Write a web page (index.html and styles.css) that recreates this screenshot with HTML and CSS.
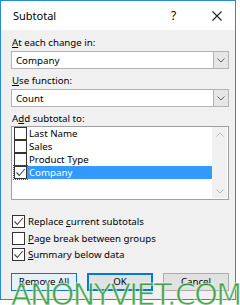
FILE: index.html
```html
<!DOCTYPE html>
<html lang="en">
<head>
    <meta charset="UTF-8">
    <title>Subtotal</title>
    <link rel="stylesheet" href="styles.css">
</head>
<body>
    <div class="dialog">
        <div class="titlebar">
            <span class="title">Subtotal</span>
            <span class="help">?</span>
            <svg class="close" width="10" height="10" viewBox="0 0 10 10"><path d="M0.5 0.5L9.5 9.5M9.5 0.5L0.5 9.5" stroke="#222" stroke-width="1.1"/></svg>
        </div>
        <div class="content">
            <div class="label"><u>A</u>t each change in:</div>
            <div class="combo">
                <span class="value">Company</span>
                <span class="drop"><svg width="8" height="5" viewBox="0 0 8 5"><path d="M0.5 0.5L4 4L7.5 0.5" fill="none" stroke="#606060"/></svg></span>
            </div>
            <div class="label"><u>U</u>se function:</div>
            <div class="combo">
                <span class="value">Count</span>
                <span class="drop"><svg width="8" height="5" viewBox="0 0 8 5"><path d="M0.5 0.5L4 4L7.5 0.5" fill="none" stroke="#606060"/></svg></span>
            </div>
            <div class="label">A<u>d</u>d subtotal to:</div>
            <div class="listbox">
                <div class="items">
                    <div class="item"><span class="box"></span><span class="text">Last Name</span></div>
                    <div class="item"><span class="box"></span><span class="text">Sales</span></div>
                    <div class="item"><span class="box"></span><span class="text">Product Type</span></div>
                    <div class="item selected"><span class="box checked"><svg width="11" height="11" viewBox="0 0 11 11"><path d="M1.5 5.5L4.3 8.5L9.8 2" fill="none" stroke="#444" stroke-width="1.1"/></svg></span><span class="text">Company</span></div>
                </div>
                <div class="scrollbar">
                    <svg width="8" height="5" viewBox="0 0 8 5"><path d="M0.5 4.5L4 1L7.5 4.5" fill="none" stroke="#b8b8b8"/></svg>
                    <svg width="8" height="5" viewBox="0 0 8 5"><path d="M0.5 0.5L4 4L7.5 0.5" fill="none" stroke="#b8b8b8"/></svg>
                </div>
            </div>
            <div class="options">
                <div class="option"><span class="box checked"><svg width="11" height="11" viewBox="0 0 11 11"><path d="M1.5 5.5L4.3 8.5L9.8 2" fill="none" stroke="#444" stroke-width="1.1"/></svg></span><span>Replace <u>c</u>urrent subtotals</span></div>
                <div class="option"><span class="box"></span><span><u>P</u>age break between groups</span></div>
                <div class="option"><span class="box checked"><svg width="11" height="11" viewBox="0 0 11 11"><path d="M1.5 5.5L4.3 8.5L9.8 2" fill="none" stroke="#444" stroke-width="1.1"/></svg></span><span><u>S</u>ummary below data</span></div>
            </div>
            <div class="buttons">
                <button class="btn remove"><u>R</u>emove All</button>
                <button class="btn ok">OK</button>
                <button class="btn">Cancel</button>
            </div>
        </div>
        <div class="watermark">ANONYVIET.COM</div>
    </div>
</body>
</html>
```

FILE: styles.css
```css
*{
    margin: 0;
    padding: 0;
    box-sizing: border-box;
}
body{
    background: #fff;
    font-family: "Noto Sans", sans-serif;
    font-size: 9.7px;
    color: #000;
    width: 240px;
    height: 305px;
    overflow: hidden;
}
u{
    text-decoration: underline;
    text-underline-offset: 1px;
}
.dialog{
    position: relative;
    width: 236px;
    height: 300px;
    border: 1px solid #2a88d8;
    background: #f0f0f0;
}
.titlebar{
    height: 29px;
    background: #fff;
    display: flex;
    align-items: center;
    padding-left: 12px;
    font-size: 11px;
}
.title{
    flex: 1;
}
.help{
    width: 10px;
    margin-right: 31px;
    font-size: 12px;
}
.close{
    margin-right: 13px;
}
.content{
    padding: 6px 6px 0 10px;
}
.label{
    height: 14px;
    line-height: 14px;
    padding-left: 1px;
}
.combo{
    height: 18px;
    margin: 1px 0 5px 0;
    background: #fff;
    border: 1px solid #b4b4b4;
    display: flex;
    align-items: center;
    padding-left: 4px;
}
.combo .value{
    flex: 1;
}
.drop{
    width: 15px;
    height: 16px;
    background: #e6e6e6;
    border-left: 1px solid #b4b4b4;
    display: flex;
    align-items: center;
    justify-content: center;
}
.listbox{
    height: 74px;
    background: #fff;
    border: 1px solid #a0a0a0;
    display: flex;
    padding: 0 1px 1px 2px;
}
.items{
    flex: 1;
}
.item{
    height: 13px;
    display: flex;
    align-items: center;
}
.box{
    width: 13px;
    height: 13px;
    border: 1px solid #333;
    background: #fff;
    display: flex;
    align-items: center;
    justify-content: center;
    flex-shrink: 0;
}
.item .text{
    flex: 1;
    height: 13px;
    line-height: 13px;
    padding-left: 2px;
}
.item.selected .text{
    background: #3399ff;
    color: #fff;
    outline: 1px dotted #c08040;
    outline-offset: -1px;
}
.item.selected .box{
    outline: 1px dotted #555;
}
.scrollbar{
    width: 15px;
    background: #f0f0f0;
    display: flex;
    flex-direction: column;
    justify-content: space-between;
    align-items: center;
    padding: 5px 0 4px;
}
.options{
    margin-top: 15px;
    display: flex;
    flex-direction: column;
    gap: 3.5px;
    padding-left: 1px;
}
.option{
    height: 13px;
    display: flex;
    align-items: center;
    gap: 3px;
}
.buttons{
    margin-top: 11.5px;
    display: flex;
    gap: 10px;
}
.btn{
    width: 66px;
    height: 18px;
    font-family: inherit;
    font-size: 9.7px;
    background: #e1e1e1;
    border: 1px solid #adadad;
    color: #000;
}
.btn.remove{
    border-color: #0078d7;
    background: #e5f1fb;
}
.btn.ok{
    border: 2px solid #0078d7;
}
.watermark{
    position: absolute;
    left: 10px;
    top: 276px;
    font-family: "DejaVu Sans", sans-serif;
    font-size: 30px;
    color: rgba(40, 150, 50, 0.85);
    -webkit-text-stroke: 1px rgba(255, 255, 255, 0.6);
    letter-spacing: -1.6px;
    white-space: nowrap;
}
```
